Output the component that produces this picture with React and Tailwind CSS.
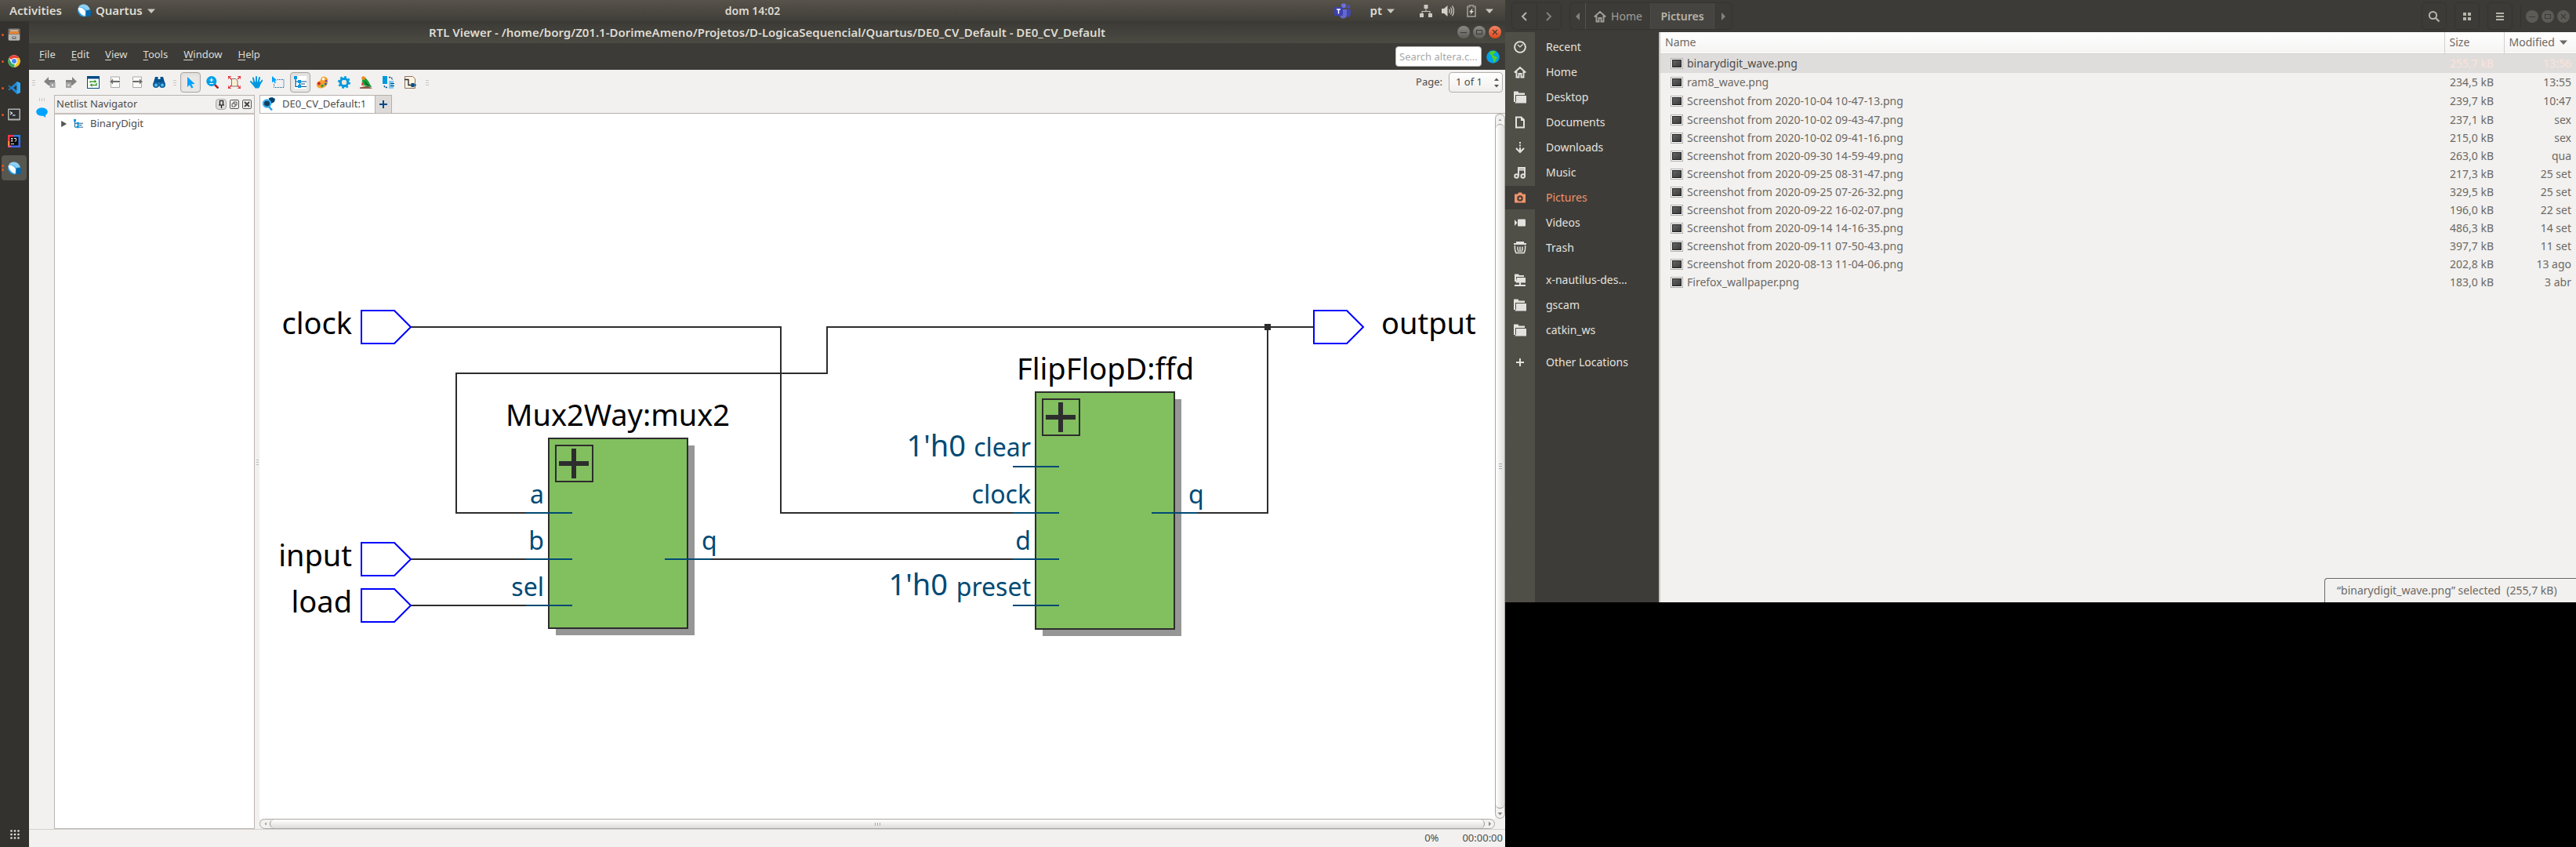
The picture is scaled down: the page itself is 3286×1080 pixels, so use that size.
import React from "react";

const Svg = ({ w = 16, h = 16, vb, className = "", children }) => (
  <svg width={w} height={h} viewBox={vb || `0 0 ${w} ${h}`} className={`shrink-0 ${className}`} aria-hidden="true">
    {children}
  </svg>
);

/* ---------- logos ---------- */
const QuartusLogo = ({ size = 17 }) => (
  <Svg w={size} h={size} vb="0 0 17 17">
    <circle cx="8" cy="8.5" r="7.8" fill="#5db9ee" />
    <path d="M1 4.5C2.5 1.5 5 .5 8 .6c3.500.3 6.300 2.600 7.400 6l-4.500 1C9 4.500 5 3.200 1 4.500z" fill="#8fd0f5" />
    <path d="M.6 5.200C4 4 8.500 6 10.200 10.500L9.500 15C5 14.500 1.500 10 .6 5.200z" fill="#fff" />
    <path d="M.4 7.500C1.500 12 5 15.500 9 16.200 5.500 17 1.300 14.500.4 10z" fill="#1b86c8" />
    <path d="M10.500 8.500l4.500-.7 2 1.500-.3 5.500-2.500 1.500-4-.8z" fill="#0468ab" />
  </Svg>
);

const FilesLogo = () => (
  <Svg>
    <rect x=".5" y=".5" width="15" height="15" rx="1.500" fill="#8d8a86" />
    <rect x="1.500" y="2" width="13" height="6" fill="#5f3a20" />
    <rect x="2.500" y="2.500" width="11" height="1.600" fill="#f7d9b8" />
    <rect x="2" y="4.500" width="12" height="2.500" fill="#f0893a" />
    <rect x="1" y="7.500" width="14" height="8" rx="1" fill="#b9b7b3" />
    <rect x="5.500" y="10.500" width="5" height="3" rx=".5" fill="#555" />
    <rect x="6.500" y="11.200" width="3" height="1" fill="#eee" />
  </Svg>
);

const ChromeLogo = () => (
  <Svg vb="0 0 48 48">
    <circle cx="24" cy="24" r="23" fill="#fff" />
    <path d="M4.100 12.500A23 23 0 0 1 43.900 12.500H24a11.500 11.500 0 0 0-10 5.800z" fill="#ea4335" />
    <path d="M43.900 12.500A23 23 0 0 1 24 47l10-17.300a11.500 11.500 0 0 0 0-11.500L31 12.500z" fill="#fbc116" />
    <path d="M24 47A23 23 0 0 1 4.100 12.500L14 29.700a11.500 11.500 0 0 0 10 5.800l3-.4z" fill="#34a853" />
    <circle cx="24" cy="24" r="11.500" fill="#fff" />
    <circle cx="24" cy="24" r="9" fill="#4285f4" />
  </Svg>
);

const CodeLogo = () => (
  <Svg>
    <path d="M11.500 0L16 2v12l-4.500 2L4 9.300 1.500 11.200.2 10.500 3 8 .2 5.500l1.300-.7L4 6.700z" fill="#1f84cf" />
    <path d="M11.500 4.500L7 8l4.500 3.500z" fill="#33322e" />
    <path d="M11.500 0L16 2v12l-4.500 2z" fill="#35a9f2" />
  </Svg>
);

const TerminalLogo = () => (
  <Svg>
    <rect y=".5" width="16" height="15" rx="1" fill="#b4b2ae" />
    <rect x="1.500" y="2" width="13" height="11.500" fill="#2e3235" />
    <path d="M3 4.500l2.500 1.800L3 8" fill="none" stroke="#eee" strokeWidth="1.200" />
    <path d="M6 9h3.500" stroke="#eee" strokeWidth="1.200" />
  </Svg>
);

const IntelliJLogo = () => (
  <Svg>
    <path d="M0 0h9L7 8 0 8z" fill="#f9384f" />
    <path d="M8 0h8v9L8 8z" fill="#2a7de8" />
    <path d="M0 8h8v8H0z" fill="#e0559a" />
    <path d="M0 8h3v5l-3 1z" fill="#f98b2f" />
    <path d="M6 8h10v8H4z" fill="#3b6cf0" />
    <rect x="2.500" y="2.500" width="11" height="11" fill="#0a0a0a" />
    <path d="M4 4.500h2.500M5.200 4.500v3.500M4 8h2.500M8 4.500h2.500v3c0 .6-.6.800-1.800.700" stroke="#eee" strokeWidth="1" fill="none" />
    <path d="M4 11.500h4" stroke="#eee" strokeWidth="1" />
  </Svg>
);

const TeamsLogo = () => (
  <Svg w={22} h={20}>
    <circle cx="18" cy="4.500" r="2.300" fill="#4a4fc0" />
    <path d="M15 8h6v6c0 2.500-2 4-4 4z" fill="#4347ad" />
    <circle cx="12" cy="3.200" r="3" fill="#6b70d8" />
    <path d="M7 8h9v6.500c0 3-2 5-4.500 5S7 17.500 7 14.500z" fill="#6468d2" />
    <rect x="0" y="5" width="11" height="11" rx="1" fill="#3d41b0" />
    <path d="M3 8h5M5.500 8v5.500" stroke="#fff" strokeWidth="1.500" />
  </Svg>
);

const Caret = ({ className = "text-[#c9c7c2]" }) => (
  <Svg w={10} h={6} className={className}>
    <path d="M0 .5h10L5 6z" fill="currentColor" />
  </Svg>
);

/* ---------- tool bar icons ---------- */
const BackIcon = () => (
  <Svg><path d="M1 7l6-6v4h8v3.500h-6V12H7z" fill="#828282" /><rect x="8.500" y="8" width="7" height="7" fill="#a3a3a3" /><rect x="11" y="10.500" width="2" height="2" fill="#eee" /></Svg>
);
const ForwardIcon = () => (
  <Svg><path d="M15 7L9 1v4H1v3.500h6V12h2z" fill="#828282" /><rect x="1" y="8" width="7" height="7" fill="#a3a3a3" /><rect x="3.500" y="10.500" width="2" height="2" fill="#eee" /></Svg>
);
const RefreshIcon = () => (
  <Svg>
    <rect x=".5" y=".5" width="15" height="15" fill="#fff" stroke="#004a86" /><rect width="16" height="3.500" fill="#004a86" />
    <path d="M4 8.500V7h6M12 9v2.500H6" stroke="#3d9a35" strokeWidth="1.500" fill="none" />
    <path d="M9.500 4.500L12.500 7l-3 2zM6.500 9L3.500 11.500l3 2.200z" fill="#3d9a35" />
  </Svg>
);
const PageBackIcon = () => (
  <Svg><path d="M2.500 5V1h11v4M2.500 9v5.500h11V9" fill="#fafafa" stroke="#a9a9a9" /><path d="M5 6h9v2H5v2.500L1 7l4-3.500z" fill="#6f6f6f" /></Svg>
);
const PageForwardIcon = () => (
  <Svg><path d="M2.500 5V1h11v4M2.500 9v5.500h11V9" fill="#fafafa" stroke="#a9a9a9" /><path d="M11 6H2v2h9v2.500L15 7l-4-3.500z" fill="#6f6f6f" /></Svg>
);
const BinocularsIcon = () => (
  <Svg>
    <path d="M3 1h3.500v3h3V1H13l2.500 8.500H10l-2-1-2 1H.5z" fill="#00508c" />
    <circle cx="4" cy="11" r="4" fill="#0b5f9c" /><circle cx="12" cy="11" r="4" fill="#0b5f9c" />
    <circle cx="4" cy="11.500" r="2" fill="#5bb7ea" /><circle cx="12" cy="11.500" r="2" fill="#5bb7ea" />
  </Svg>
);
const PointerIcon = () => (
  <Svg><path d="M4 1l9.500 9-4.300.2 2.300 4.300-2.300 1.100-2.200-4.400L4 14z" fill="#00a2ff" /></Svg>
);
const ZoomIcon = () => (
  <Svg>
    <path d="M10 10l5.500 5.500" stroke="#b01c22" strokeWidth="2.600" /><circle cx="6.800" cy="6.500" r="6.500" fill="#009fe8" />
    <path d="M6.800 2.500v5M4.300 5h5M4.300 9.500h5" stroke="#fff" strokeWidth="1.200" />
  </Svg>
);
const FitIcon = () => (
  <Svg>
    <path d="M4.500 3.500h5l2.500 2.500v7h-7.500z" fill="#fbf0d6" stroke="#8d7060" />
    <path d="M0 4V0h4M12 0h4v4M0 12v4h4M12 16h4v-4M0 0l4 4M16 0l-4 4M0 16l4-4M16 16l-4-4" stroke="#e8232b" strokeWidth="1.300" fill="none" />
  </Svg>
);
const HandIcon = () => (
  <Svg>
    <path d="M5.500 9L4 2.500M8 8V1M10.500 8.500L12 2M12.500 10l3-4.500M5 11.500L1 7" stroke="#0099e0" strokeWidth="2" strokeLinecap="round" />
    <path d="M4 7.500l9.500-.3-.5 4.800-2 3.500H6.500L3.500 11z" fill="#0099e0" />
  </Svg>
);
const AreaIcon = () => (
  <Svg><path d="M0 0l6.500 5.500-3 .2L5 8.500l-1.500.8L2 6.500 0 8.500z" fill="#00a2ff" /><path d="M7 4.500h8v10H2.500V9.500" fill="none" stroke="#00508c" strokeDasharray="1 1" /></Svg>
);
const HierarchyIcon = () => (
  <Svg>
    <rect width="16" height="16" fill="#fff" />
    <path d="M2 2v11.500h4M2 7h4M9 7h7M9 13.500h7M9 10h5M7.500 7v6" stroke="#004f8a" strokeWidth="1.200" fill="none" />
    <rect x="0" y="0" width="4" height="4" fill="#0099e0" /><rect x="5" y="5" width="4" height="4" fill="#0099e0" /><rect x="5" y="11" width="4" height="4" fill="#0099e0" />
  </Svg>
);
const PaletteIcon = () => (
  <Svg>
    <path d="M9 .8c4-.5 6.500 2 6.300 6-.3 5-4 8.700-9 8.700C2.500 15.500.5 13 .8 10c.3-2.500 2.200-3.500 4-3.800C6.800 5.800 5.500 1.500 9 .8z" fill="#f5a02a" />
    <circle cx="9.500" cy="3.800" r="1.800" fill="#fff" /><circle cx="4" cy="9.500" r="1.900" fill="#d5202a" /><circle cx="8" cy="12.500" r="1.700" fill="#2f9e3b" /><circle cx="12.300" cy="10" r="1.600" fill="#2067c8" /><circle cx="13" cy="6.300" r="1.300" fill="#7a35b5" />
  </Svg>
);
const GearIcon = () => (
  <Svg><circle cx="8" cy="8" r="4.700" fill="none" stroke="#0099e0" strokeWidth="3.200" /><circle cx="8" cy="8" r="7" fill="none" stroke="#0099e0" strokeWidth="2" strokeDasharray="2.750 2.750" /><circle cx="8" cy="8" r="3" fill="#f7e7d6" /></Svg>
);
const BirdIcon = () => (
  <Svg>
    <path d="M0 14.500l10-2 6 3.500H0z" fill="#8a5a44" /><path d="M3 4l4-2 4 4.500 2 4 2.500 4-4-1.500-5-.5C3.500 11 2.500 8 3 4z" fill="#17a03a" />
    <path d="M6 6l5 5 3 3-5-2c-2-1-3-3-3-6z" fill="#0b6b2a" /><circle cx="4.500" cy="2.700" r="2.400" fill="#f08a24" /><path d="M3 7l-1 4 3 2z" fill="#e03a26" />
  </Svg>
);
const SwapIcon = () => (
  <Svg>
    <rect x="1" y="0" width="6" height="10" fill="#0099e0" /><rect x="9" y="6" width="6" height="10" fill="#7fc9f0" />
    <path d="M9 1.500c3 0 4.500 1 4.500 3.500M7 14.500c-3 0-4-1-4-3.500" stroke="#00508c" strokeWidth="1.500" strokeDasharray="2 1" fill="none" />
    <path d="M11 9.500h5M11 12.500h5" stroke="#00508c" />
  </Svg>
);
const NetIcon = () => (
  <Svg>
    <path d="M1.500.5h10L14.500 3.500v12h-13z" fill="#fcf3e1" stroke="#8d7060" /><path d="M1 4.500h5v7h4" stroke="#222" strokeWidth="1.300" fill="none" />
    <rect x="9.500" y="9" width="4" height="5" fill="#004f8a" /><path d="M13 11.500h3" stroke="#004f8a" strokeWidth="1.500" />
  </Svg>
);

const navTools = [
  ["Back", BackIcon], ["Forward", ForwardIcon], ["Refresh", RefreshIcon],
  ["Previous page", PageBackIcon], ["Next page", PageForwardIcon], ["Find", BinocularsIcon],
];
const viewTools = [
  ["Select", PointerIcon, true], ["Zoom", ZoomIcon], ["Fit in window", FitIcon], ["Pan", HandIcon], ["Area select", AreaIcon],
  ["Netlist Navigator", HierarchyIcon, true], ["Colors", PaletteIcon], ["Settings", GearIcon], ["Bird's eye view", BirdIcon], ["Swap", SwapIcon], ["Nets", NetIcon],
];

const Grip = ({ className = "" }) => (
  <span className={`flex w-1 shrink-0 flex-col gap-0.5 ${className}`}>
    <i className="h-px bg-[#c9c6c3]" /><i className="h-px bg-[#c9c6c3]" /><i className="h-px bg-[#c9c6c3]" />
  </span>
);

const ToolButton = ({ label, Icon, on }) => (
  <button
    aria-label={label}
    className={
      on
        ? "mx-px flex h-[26px] w-[26px] items-center justify-center rounded border border-[#a9a5a1] bg-[#e9e7e5] shadow-inner"
        : "flex h-[26px] w-7 items-center justify-center"
    }
  >
    <Icon />
  </button>
);

/* ---------- schematic ---------- */
const Pin = ({ x, y, shoulder, tip }) => (
  <path d={`M${x} ${y - 21}H${shoulder}L${tip} ${y}L${shoulder} ${y + 21}H${x}Z`} fill="#fff" stroke="#0000ff" strokeWidth="2" />
);
const Block = ({ x, y, w, h }) => (
  <g>
    <rect x={x + 9} y={y + 9} width={w} height={h} fill="#969696" />
    <rect x={x} y={y} width={w} height={h} fill="#82bf5f" stroke="#2d2d2d" strokeWidth="2" />
    <rect x={x + 9} y={y + 9} width="47" height="46" fill="none" stroke="#2d2d2d" strokeWidth="2" />
    <path d={`M${x + 13} ${y + 32}h38M${x + 32} ${y + 13}v38`} stroke="#2d2d2d" strokeWidth="6" />
  </g>
);

const Schematic = () => (
  <svg viewBox="331 145 1576 899" className="h-full w-full bg-white font-['Noto_Sans',sans-serif]" role="img" aria-label="RTL schematic of BinaryDigit">
    <g fill="none" stroke="#2d2d2d" strokeWidth="2">
      <path d="M523 417H996V654H1292" />
      <path d="M671 654H582V476H1055V417H1676" />
      <path d="M1528 654H1617V417" />
      <path d="M523 713H671M523 772H671M907 713H1292" />
    </g>
    <rect x="1613" y="413" width="8" height="8" fill="#2d2d2d" />
    <Pin x={461} y={417} shoulder={503} tip={524} />
    <Pin x={461} y={713} shoulder={503} tip={524} />
    <Pin x={461} y={772} shoulder={503} tip={524} />
    <Pin x={1676} y={417} shoulder={1718} tip={1739} />
    <Block x={700} y={559} w={177} h={242} />
    <Block x={1321} y={500} w={177} h={302} />
    <path d="M671 654h59M671 713h59M671 772h59M848 713h59M1292 595h59M1292 654h59M1292 713h59M1292 772h59M1469 654h59" stroke="#004a74" strokeWidth="2" />
    <g fontSize="38" fill="#000">
      <text x="449" y="426" textAnchor="end">clock</text>
      <text x="449" y="722" textAnchor="end">input</text>
      <text x="449" y="781" textAnchor="end">load</text>
      <text x="788" y="543" textAnchor="middle">Mux2Way:mux2</text>
      <text x="1410" y="484" textAnchor="middle">FlipFlopD:ffd</text>
      <text x="1762" y="426">output</text>
    </g>
    <g fontSize="32" fill="#004a74">
      <text x="694" y="642" textAnchor="end">a</text>
      <text x="694" y="701" textAnchor="end">b</text>
      <text x="694" y="760" textAnchor="end">sel</text>
      <text x="895" y="701">q</text>
      <text x="1315" y="582" textAnchor="end">clear</text>
      <text x="1315" y="642" textAnchor="end">clock</text>
      <text x="1315" y="701" textAnchor="end">d</text>
      <text x="1315" y="760" textAnchor="end">preset</text>
      <text x="1516" y="642">q</text>
    </g>
    <g fontSize="38" fill="#004a74">
      <text x="1232" y="582" textAnchor="end">1'h0</text>
      <text x="1209" y="759" textAnchor="end">1'h0</text>
    </g>
  </svg>
);

/* ---------- left monitor ---------- */
const TopBar = () => (
  <header className="grid h-[27px] shrink-0 grid-cols-3 items-center bg-gradient-to-b from-[#57534b] to-[#403e38] text-[15px] font-semibold text-[#dfdbd2]">
    <div className="flex items-center">
      <button className="ml-3">Activities</button>
      <button className="ml-5 flex items-center gap-1.5"><QuartusLogo />Quartus<Caret /></button>
    </div>
    <time className="text-center text-sm">dom 14:02</time>
    <div className="flex items-center justify-end pr-[15px]">
      <TeamsLogo />
      <button className="ml-6 mr-8 flex items-center gap-1.5">pt<Caret /></button>
      <Svg className="mr-3 text-[#c9c7c2]"><path d="M5.500 0h5v5h-5zM0 11h5v5H0zM11 11h5v5h-5zM7.500 5h1v3h5v3h-1V9h-9v2h-1V8h5z" fill="currentColor" /></Svg>
      <Svg className="mr-4">
        <path d="M0 5h3l4.500-4v14L3 11H0z" fill="#d3d1cc" />
        <path d="M9.500 5.500q1.500 2.500 0 5M11.500 3.500q2.800 4.500 0 9M13.500 1.500q4 6.500 0 13" stroke="#c9c7c2" strokeWidth="1.300" fill="none" />
      </Svg>
      <Svg w={12} h={16} className="mr-3"><path d="M1 2.500h2.500V1h5v1.500H11v12.500H1z" fill="none" stroke="#8f8d87" strokeWidth="2" /><path d="M7.500 4.500L3 9.500h2.500L4.500 13 9 8H6.500z" fill="#dfdbd2" /></Svg>
      <Caret />
    </div>
  </header>
);

const dockApps = [
  ["Files", FilesLogo, 1], ["Chrome", ChromeLogo, 1], ["Visual Studio Code", CodeLogo, 1],
  ["Terminal", TerminalLogo, 1], ["IntelliJ IDEA", IntelliJLogo, 0], ["Quartus", QuartusLogo, 2],
];

const Dock = () => (
  <nav className="flex w-[37px] shrink-0 flex-col bg-[#33322e] pb-2.5">
    {dockApps.map(([name, Logo, dots]) => (
      <button key={name} aria-label={name} className="flex h-[34px] items-center pl-0.5">
        <span className={`flex h-8 w-8 items-center rounded ${dots === 2 ? "bg-[#57564f]" : ""}`}>
          <span className="flex w-2 flex-col gap-0.5">
            {Array.from({ length: dots }, (_, i) => <i key={i} className="h-[3px] w-[3px] rounded-full bg-[#e95420]" />)}
          </span>
          <Logo />
        </span>
      </button>
    ))}
    <button aria-label="Show Applications" className="mt-auto self-center">
      <Svg w={12} h={12}>
        {[1.5, 6, 10.5].map((y) => [1.5, 6, 10.5].map((x) => <circle key={`${x}-${y}`} cx={x} cy={y} r="1.300" fill="#e6e6e6" />))}
      </Svg>
    </button>
  </nav>
);

const WindowButtons = ({ className = "", muted }) => {
  const base = muted
    ? "flex h-4 w-4 items-center justify-center rounded-full bg-[#5d5b55]"
    : "flex h-4 w-4 items-center justify-center rounded-full bg-gradient-to-b from-[#8b8983] to-[#5f5d57]";
  return (
    <div className={`flex gap-1 ${className}`}>
      <button aria-label="Minimize" className={base}><Svg w={8} h={8}><path d="M0 4.500h8" stroke="#3c3b37" /></Svg></button>
      <button aria-label="Maximize" className={base}><Svg w={8} h={8}><rect x=".5" y="1.500" width="7" height="5" fill="none" stroke="#3c3b37" /></Svg></button>
      <button
        aria-label="Close"
        className={muted ? base : "flex h-4 w-4 items-center justify-center rounded-full bg-gradient-to-b from-[#f58161] to-[#dd4814]"}
      >
        <Svg w={8} h={8}><path d="M1 1l6 6M7 1L1 7" stroke="#3c3b37" strokeWidth="1.200" /></Svg>
      </button>
    </div>
  );
};

const Globe = () => (
  <Svg w={17} h={17}>
    <circle cx="8.500" cy="8.500" r="8.300" fill="#00a2e8" />
    <path d="M4.500 2l5-1.200 2.500 1-.8 2-2.200 1.200-.5 1.800 3 .7 2.500 2-1.500 2.500-2 3.500-1.300-.5-.3-3.500-2-2.500L7 7 4.500 5z" fill="#4fd02b" />
  </Svg>
);

const QuartusWindow = () => (
  <section className="flex min-w-0 flex-1 flex-col bg-[#f2f1ef] text-[13px] text-[#4c4c4c]">
    <div className="grid h-7 shrink-0 grid-cols-[1fr_auto_1fr] items-center bg-gradient-to-b from-[#3b3a35] to-[#4b4a43] px-[5px] text-[#dfdbd2]">
      <h1 className="col-start-2 text-[15px] font-semibold">
        RTL Viewer - /home/borg/Z01.1-DorimeAmeno/Projetos/D-LogicaSequencial/Quartus/DE0_CV_Default - DE0_CV_Default
      </h1>
      <WindowButtons className="justify-self-end" />
    </div>

    <div className="flex h-[34px] shrink-0 items-start bg-[#3c3b37] pl-[13px] pr-[7px] text-[#dfdbd2]">
      <nav className="flex flex-1 gap-5 pt-1 leading-5">
        {["File", "Edit", "View", "Tools", "Window", "Help"].map((m) => (
          <button key={m}><u className="underline-offset-2">{m[0]}</u>{m.slice(1)}</button>
        ))}
      </nav>
      <div className="flex items-center gap-1.5 pt-1">
        <input aria-label="Search altera.com" placeholder="Search altera.c..." className="h-[26px] w-[110px] rounded-sm border border-[#b5b3af] bg-white px-1 placeholder:text-[#a8a8a8]" />
        <button aria-label="Open web site"><Globe /></button>
      </div>
    </div>

    <div className="flex h-8 shrink-0 items-center pl-1 pr-[3px]">
      <Grip className="mr-1" />
      <div className="flex">{navTools.map(([l, I]) => <ToolButton key={l} label={l} Icon={I} />)}</div>
      <Grip className="mx-1" />
      <div className="flex">{viewTools.map(([l, I, on]) => <ToolButton key={l} label={l} Icon={I} on={on} />)}</div>
      <Grip className="ml-1.5" />
      <label htmlFor="page" className="ml-auto mr-2">Page:</label>
      <div className="flex h-[26px] w-[69px] items-center rounded border border-[#b3afab] bg-gradient-to-b from-white to-[#f0efed] pl-2 pr-1">
        <input id="page" defaultValue="1 of 1" className="w-full min-w-0 bg-transparent" />
        <Svg w={6} h={14}><path d="M0 5l3-3.500L6 5zM0 10h6l-3 3.500z" fill="#555" /></Svg>
      </div>
    </div>

    <div className="flex min-h-0 flex-1">
      <div className="flex w-8 flex-col items-center gap-2 pt-1">
        <span className="flex gap-0.5"><i className="h-1 w-px bg-[#c9c6c3]" /><i className="h-1 w-px bg-[#c9c6c3]" /><i className="h-1 w-px bg-[#c9c6c3]" /></span>
        <button aria-label="Messages">
          <Svg w={15} h={13}><ellipse cx="7.500" cy="5.500" rx="7.300" ry="5.300" fill="#00a2ff" /><path d="M7 9l5 4v-5z" fill="#00a2ff" /></Svg>
        </button>
      </div>

      <aside className="flex w-64 shrink-0 flex-col border border-[#bab5b1] bg-white">
        <div className="flex h-6 items-center gap-1 border-b-2 border-[#c5beba] bg-[#f2f1ef] pl-0.5 pr-[3px]">
          <h2 className="flex-1 text-[13px]">Netlist Navigator</h2>
          <button aria-label="Auto hide" className="flex h-[14px] w-[14px] items-center justify-center rounded border border-[#a9a5a1] bg-[#dddbd9]">
            <Svg w={8} h={10}><path d="M2.500 6V.5h4V6M1 6h7M4.500 6v4" stroke="#111" fill="none" strokeWidth="1.200" /></Svg>
          </button>
          <button aria-label="Detach"><Svg w={12} h={12}><rect x=".5" y=".5" width="11" height="11" rx="1.500" fill="none" stroke="#555" /><path d="M5 5V3h4v4H7M3 5h4v4H3z" stroke="#555" fill="none" /></Svg></button>
          <button aria-label="Close panel"><Svg w={12} h={12}><rect x=".5" y=".5" width="11" height="11" rx="1.500" fill="none" stroke="#555" /><path d="M3 3l6 6M9 3l-6 6" stroke="#444" strokeWidth="2" /></Svg></button>
        </div>
        <ul>
          <li className="flex h-6 items-center gap-2 pl-2">
            <button aria-label="Expand"><Svg w={7} h={8}><path d="M.5.5L6.500 4 .5 7.500z" fill="#555" stroke="#333" strokeWidth=".5" /></Svg></button>
            <Svg w={14} h={12} vb="0 0 16 16"><path d="M2 2v11.500h4M2 7h4M9 7h7M9 13.500h7M9 10h5M7.500 7v6" stroke="#004f8a" strokeWidth="1.200" fill="none" /><path d="M0 0h4v4H0zM5 5h4v4H5zM5 11h4v4H5z" fill="#0099e0" /></Svg>
            <span>BinaryDigit</span>
          </li>
        </ul>
      </aside>
      <div className="flex w-1.5 flex-col items-center justify-center gap-0.5">
        <i className="h-px w-[3px] bg-[#bbb]" /><i className="h-px w-[3px] bg-[#bbb]" /><i className="h-px w-[3px] bg-[#bbb]" />
      </div>

      <main className="flex min-w-0 flex-1 flex-col">
        <div className="flex h-6 shrink-0 border-b border-[#b5b1ad]" role="tablist">
          <button role="tab" aria-selected="true" className="flex w-[148px] items-center gap-2 border border-b-0 border-[#b5b1ad] bg-white pl-0.5">
            <Svg w={18} h={18}>
              <path d="M9 1l4-1 4 2-1 4-4 2-3-3z" fill="#00406f" /><circle cx="6.500" cy="8" r="4.700" fill="#123f63" stroke="#39b2ee" strokeWidth="2.200" /><path d="M9 12l4 4.500" stroke="#2da3e0" strokeWidth="2.600" />
            </Svg>
            DE0_CV_Default:1
          </button>
          <button aria-label="New tab" className="flex w-[21px] items-center justify-center border border-b-0 border-l-0 border-[#b5b1ad] bg-[#dddad8]">
            <Svg w={10} h={10}><path d="M5 0v10M0 5h10" stroke="#004a86" strokeWidth="2" /></Svg>
          </button>
        </div>
        <div className="grid min-h-0 flex-1 grid-cols-[1fr_13px] grid-rows-[1fr_13px]">
          <div className="min-h-0 min-w-0"><Schematic /></div>
          <div className="flex flex-col items-center justify-between rounded-full border border-[#aaa6a2] bg-[#f2f1ef]">
            <Svg w={11} h={12}><path d="M3.500 8h4l-2-2.500z" fill="#999" /></Svg>
            <div className="flex w-full flex-1 flex-col items-center justify-center gap-0.5 rounded-full border-y border-[#9a9692] bg-gradient-to-r from-white to-[#dedcda]">
              <i className="h-px w-1 bg-[#aaa]" /><i className="h-px w-1 bg-[#aaa]" /><i className="h-px w-1 bg-[#aaa]" />
            </div>
            <Svg w={11} h={12}><path d="M2.500 5h6l-3 3.500z" fill="#888" /></Svg>
          </div>
          <div className="flex items-center justify-between rounded-full border border-[#aaa6a2] bg-[#f2f1ef]">
            <Svg w={12} h={11}><path d="M8 3.500v4L5.500 5.500z" fill="#999" /></Svg>
            <div className="flex h-full flex-1 items-center justify-center gap-0.5 rounded-full border-x border-[#9a9692] bg-gradient-to-b from-white to-[#dedcda]">
              <i className="h-1 w-px bg-[#aaa]" /><i className="h-1 w-px bg-[#aaa]" /><i className="h-1 w-px bg-[#aaa]" />
            </div>
            <Svg w={12} h={11}><path d="M5 2.500v6l3-3z" fill="#888" /></Svg>
          </div>
        </div>
      </main>
    </div>

    <footer className="flex h-[23px] shrink-0 items-center justify-end gap-[30px] border-t border-[#d5d2cf] pr-[3px]">
      <span>0%</span><span>00:00:00</span>
    </footer>
  </section>
);

/* ---------- right monitor ---------- */
const Folder = () => <Svg><path d="M0 .5h5.500l1 2H14V5H2v9H0z" fill="currentColor" /><path d="M3 6h13v9.500H1.500L3 13z" fill="currentColor" /></Svg>;
const HomeIcon = () => (
  <Svg><path d="M.8 8.500L8 2l7.200 6.500M3.500 7v7.500h3V10h3v4.500h3V7" fill="none" stroke="currentColor" strokeWidth="1.900" /></Svg>
);
const Recent = () => <Svg><circle cx="8" cy="8" r="6.900" fill="none" stroke="currentColor" strokeWidth="1.900" /><path d="M5 5l3 3 3.500-3.500" fill="none" stroke="currentColor" strokeWidth="1.200" /></Svg>;
const Doc = () => <Svg><path d="M3 1.500h6.500L13 5v9.500H3z" fill="none" stroke="currentColor" strokeWidth="2" /><path d="M9 1v5h5z" fill="currentColor" /></Svg>;
const Down = () => <Svg><path d="M7 1h2v2H7zM7 4.500h2v2H7zM7 8h2v5H7z" fill="currentColor" /><path d="M3 9l5 5 5-5" fill="none" stroke="currentColor" strokeWidth="2" /></Svg>;
const Music = () => <Svg><circle cx="3.500" cy="12.500" r="2.300" fill="none" stroke="currentColor" strokeWidth="1.900" /><circle cx="11.700" cy="12.500" r="2.300" fill="none" stroke="currentColor" strokeWidth="1.900" /><path d="M6 12V2h8v10.500M6 4.500h8" fill="none" stroke="currentColor" strokeWidth="1.900" /></Svg>;
const Camera = () => <Svg><path d="M1 3.500h4L6 1.500h4l1 2h4v11H1zM8 5.200a3.700 3.700 0 1 0 0 7.400 3.700 3.700 0 0 0 0-7.400zM8 7.200a1.700 1.700 0 1 1 0 3.400 1.700 1.700 0 0 1 0-3.400z" fill="currentColor" fillRule="evenodd" /></Svg>;
const Video = () => <Svg><rect x="5" y="3.500" width="10" height="9" rx="1" fill="currentColor" /><path d="M1 4l3.500 4L1 12z" fill="currentColor" /></Svg>;
const Trash = () => <Svg><path d="M3 1h10M0 3h16" stroke="currentColor" strokeWidth="2" /><path d="M1.500 5c-.5 4 0 7 1.500 9.500h10c1.500-2.500 2-5.500 1.500-9.500M5 6.500v3l1 3.500M8 6.500V13M11 6.500v3L10 13" fill="none" stroke="currentColor" strokeWidth="1.500" /></Svg>;
const NetFolder = () => <Svg><path d="M1 .5h5l1 1.500h6v2H3v6H1z" fill="currentColor" /><path d="M4 5h11v6.500H2.500zM7 11h2v3h6v2H1v-2h6z" fill="currentColor" /></Svg>;
const Plus = () => <Svg><path d="M8 3v10M3 8h10" stroke="currentColor" strokeWidth="2" /></Svg>;

const placeGroups = [
  [["Recent", Recent], ["Home", HomeIcon], ["Desktop", Folder], ["Documents", Doc], ["Downloads", Down], ["Music", Music], ["Pictures", Camera], ["Videos", Video], ["Trash", Trash]],
  [["x-nautilus-des…", NetFolder], ["gscam", Folder], ["catkin_ws", Folder]],
  [["Other Locations", Plus]],
];

const files = [
  ["binarydigit_wave.png", "255,7 kB", "13:56"],
  ["ram8_wave.png", "234,5 kB", "13:55"],
  ["Screenshot from 2020-10-04 10-47-13.png", "239,7 kB", "10:47"],
  ["Screenshot from 2020-10-02 09-43-47.png", "237,1 kB", "sex"],
  ["Screenshot from 2020-10-02 09-41-16.png", "215,0 kB", "sex"],
  ["Screenshot from 2020-09-30 14-59-49.png", "263,0 kB", "qua"],
  ["Screenshot from 2020-09-25 08-31-47.png", "217,3 kB", "25 set"],
  ["Screenshot from 2020-09-25 07-26-32.png", "329,5 kB", "25 set"],
  ["Screenshot from 2020-09-22 16-02-07.png", "196,0 kB", "22 set"],
  ["Screenshot from 2020-09-14 14-16-35.png", "486,3 kB", "14 set"],
  ["Screenshot from 2020-09-11 07-50-43.png", "397,7 kB", "11 set"],
  ["Screenshot from 2020-08-13 11-04-06.png", "202,8 kB", "13 ago"],
  ["Firefox_wallpaper.png", "183,0 kB", "3 abr"],
];

const Thumb = () => (
  <span className="flex h-[14px] w-4 shrink-0 items-center justify-center border border-[#b0aeab] bg-white">
    <i className="h-2.5 w-3 border border-[#222] bg-gradient-to-br from-[#666] to-[#3a3a3a]" />
  </span>
);

const headerButton = "flex h-[35px] w-8 items-center justify-center rounded-[5px] border border-[#34332f]";

const FilesWindow = () => (
  <section className="relative flex min-h-0 flex-col bg-[#f2f1ef] text-sm text-[#6c6965]">
    <header className="flex h-[41px] shrink-0 items-center bg-[#3c3b37] pl-2 pr-2 text-[#b7b3aa]">
      <div className="flex h-[35px] w-16 rounded-[5px] border border-[#34332f]">
        <button aria-label="Back" className="flex flex-1 items-center justify-center border-r border-[#34332f]"><Svg w={8} h={12}><path d="M7 1L2 6l5 5" fill="none" stroke="currentColor" strokeWidth="2" /></Svg></button>
        <button aria-label="Forward" className="flex flex-1 items-center justify-center text-[#85827b]"><Svg w={8} h={12}><path d="M1 1l5 5-5 5" fill="none" stroke="currentColor" strokeWidth="2" /></Svg></button>
      </div>
      <nav className="ml-2.5 flex h-[35px] rounded-[5px] border border-[#34332f]">
        <button aria-label="Scroll path left" className="flex w-5 items-center justify-center border-r border-[#55534d] text-[#85827b]"><Svg w={5} h={10}><path d="M5 0v10L0 5z" fill="currentColor" /></Svg></button>
        <button className="flex w-[82px] items-center justify-center gap-1.5 text-[#a29f97]"><HomeIcon />Home</button>
        <button className="w-[82px] border-x border-[#4d4b45] bg-[#454440] text-center font-semibold">Pictures</button>
        <button aria-label="Scroll path right" className="flex w-[22px] items-center justify-center text-[#85827b]"><Svg w={5} h={10}><path d="M0 0v10l5-5z" fill="currentColor" /></Svg></button>
      </nav>
      <div className="ml-auto flex gap-2.5 pr-2.5">
        <button aria-label="Search" className={headerButton}><Svg><circle cx="6.500" cy="6.500" r="4.600" fill="none" stroke="currentColor" strokeWidth="2" /><path d="M10 10l4.500 4.500" stroke="currentColor" strokeWidth="2.300" /></Svg></button>
        <button aria-label="Grid view" className={headerButton}><Svg w={10} h={10}><path d="M0 0h4v4H0zM6 0h4v4H6zM0 6h4v4H0zM6 6h4v4H6z" fill="currentColor" /></Svg></button>
        <button aria-label="Menu" className={headerButton}><Svg w={10} h={10}><path d="M0 1h10M0 5h10M0 9h10" stroke="currentColor" strokeWidth="2" /></Svg></button>
      </div>
      <WindowButtons muted className="border-l border-[#34332f] py-1.5 pl-1.5" />
    </header>

    <div className="flex min-h-0 flex-1">
      <aside className="w-[198px] shrink-0 border-r-2 border-[#c8c6c3] bg-[linear-gradient(to_right,#504f47_38px,#3e3c38_38px)] pt-[3px] text-[#e4e2de]">
        {placeGroups.map((group, g) => (
          <ul key={g} className="mb-[9px]">
            {group.map(([name, Icon]) => (
              <li key={name}>
                <a href={`#${name}`} className={`flex h-8 items-center ${name === "Pictures" ? "text-[#f0946c]" : ""}`}>
                  <span className={`mr-3.5 flex h-[30px] w-[38px] items-center justify-center ${name === "Pictures" ? "bg-[#3e3c38]" : ""}`}><Icon /></span>
                  {name}
                </a>
              </li>
            ))}
          </ul>
        ))}
      </aside>

      <div className="min-w-0 flex-1">
        <table className="w-full table-fixed border-collapse">
          <colgroup><col /><col className="w-[76px]" /><col className="w-[92px]" /></colgroup>
          <thead>
            <tr className="h-[27px] border-b border-[#d3d0cd] bg-gradient-to-b from-white to-[#f5f4f3] text-left">
              <th className="border-r border-[#d3d0cd] pl-1.5 font-normal">Name</th>
              <th className="border-r border-[#d3d0cd] pl-1.5 font-normal">Size</th>
              <th className="pl-1.5 font-normal"><span className="flex items-center gap-1.5">Modified<Caret className="text-[#6c6965]" /></span></th>
            </tr>
          </thead>
          <tbody>
            {files.map(([name, size, date], i) => (
              <tr key={name} className={i === 0 ? "h-[25px] bg-[#dfdddb]" : i < 3 ? "h-6" : "h-[23px]"}>
                <td className={`pl-[13px] ${i === 0 ? "text-[#4c4c4c]" : ""}`}><span className="flex items-center gap-[5px]"><Thumb />{name}</span></td>
                <td className={`pl-[7px] ${i === 0 ? "text-[#fbe3da]" : ""}`}>{size}</td>
                <td className={`pr-1.5 text-right ${i === 0 ? "text-[#fbe3da]" : ""}`}>{date}</td>
              </tr>
            ))}
          </tbody>
        </table>
      </div>
    </div>
    <output className="absolute bottom-0 right-0 h-[31px] w-[321px] whitespace-pre rounded-tl border-l border-t border-[#6c6965] bg-[#f2f1ef] pl-[15px] leading-[30px]">
      “binarydigit_wave.png” selected  (255,7 kB)
    </output>
  </section>
);

export default function App() {
  return (
    <div className="grid h-screen grid-cols-[1920fr_1366fr] bg-black font-['Noto_Sans',sans-serif]">
      <div className="flex h-screen min-w-0 flex-col">
        <TopBar />
        <div className="flex min-h-0 flex-1">
          <Dock />
          <QuartusWindow />
        </div>
      </div>
      <div className="grid h-screen min-w-0 grid-rows-[768fr_312fr]">
        <FilesWindow />
      </div>
    </div>
  );
}
